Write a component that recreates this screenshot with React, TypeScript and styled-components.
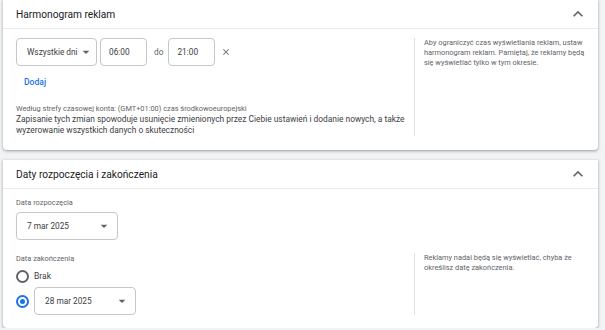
import styled, { createGlobalStyle } from 'styled-components';

const GlobalStyle = createGlobalStyle`
  html, body {
    margin: 0;
    padding: 0;
    background: #f1f3f4;
    font-family: Roboto, 'Liberation Sans', Arial, sans-serif;
    color: #3c4043;
  }
`;

const Page = styled.div`
  width: 595px;
  padding: 0 7px 0 3px;
  display: flex;
  flex-direction: column;
  gap: 10px;
`;

const Card = styled.section`
  background: #fff;
  border-radius: 0 0 4px 4px;
  box-shadow: 0 1px 2px rgba(60, 64, 67, 0.3), 0 1px 3px 1px rgba(60, 64, 67, 0.15);
`;

const CardHeader = styled.header`
  height: 28px;
  display: flex;
  align-items: center;
  justify-content: space-between;
  padding: 0 10px 0 13px;
  border-bottom: 1px solid #e8eaed;
  font-size: 10.2px;
  color: #202124;
`;

const CardBody = styled.div<{ $rowGap?: number; $padBottom?: number }>`
  display: flex;
  flex-direction: column;
  gap: ${(p) => p.$rowGap ?? 0}px;
  padding: 9px 0 ${(p) => p.$padBottom ?? 9}px 0;
`;

const Row = styled.div<{ $padBottom?: number }>`
  display: grid;
  grid-template-columns: 411px 1fr;
  padding-bottom: ${(p) => p.$padBottom ?? 0}px;
`;

const Main = styled.div`
  padding-left: 13px;
  display: flex;
  flex-direction: column;
  align-items: flex-start;
`;

const Aside = styled.aside<{ $visible?: boolean }>`
  border-left: ${(p) => (p.$visible ? '1px solid #e0e0e0' : 'none')};
  padding: 0 10px 0 9px;
  font-size: 7.4px;
  line-height: 10px;
  color: #5f6368;
`;

const Controls = styled.div`
  display: flex;
  align-items: center;
  gap: 3px;
`;

const Field = styled.div<{ $width: number; $padLeft?: number }>`
  box-sizing: border-box;
  width: ${(p) => p.$width}px;
  height: 28px;
  border: 1px solid #c4c7c5;
  border-radius: 4px;
  display: flex;
  align-items: center;
  justify-content: space-between;
  padding: 0 5px 0 ${(p) => p.$padLeft ?? 10}px;
  font-size: 8.3px;
  color: #3c4043;
  white-space: nowrap;
  svg {
    flex-shrink: 0;
  }
`;

const Word = styled.span`
  font-size: 8.3px;
  color: #5f6368;
  margin: 0 2px 0 4px;
`;

const IconButton = styled.span`
  display: inline-flex;
  color: #5f6368;
  margin-left: 3px;
`;

const TextButton = styled.button`
  border: none;
  background: none;
  font-family: inherit;
  font-size: 8.6px;
  font-weight: 500;
  color: #1a73e8;
  padding: 5px 8px;
  margin-top: 5px;
  line-height: 12px;
`;

const Note = styled.div`
  font-size: 7.4px;
  line-height: 10px;
  color: #5f6368;
  margin-top: 11px;
`;

const Paragraph = styled.p`
  margin: 0;
  font-size: 8.4px;
  line-height: 11px;
  color: #3c4043;
  width: 396px;
`;

const Label = styled.div<{ $mb?: number; $lh?: number }>`
  font-size: 7.4px;
  line-height: ${(p) => p.$lh ?? 10}px;
  color: #5f6368;
  margin-bottom: ${(p) => p.$mb ?? 0}px;
`;

const RadioRow = styled.label<{ $height: number }>`
  display: flex;
  align-items: center;
  gap: 5px;
  height: ${(p) => p.$height}px;
  font-size: 8.5px;
  color: #3c4043;
`;

const Radio = styled.span<{ $checked?: boolean }>`
  box-sizing: border-box;
  width: 13px;
  height: 13px;
  border-radius: 50%;
  border: 2px solid ${(p) => (p.$checked ? '#1a73e8' : '#5f6368')};
  display: inline-flex;
  align-items: center;
  justify-content: center;
  &::after {
    content: '';
    width: 5px;
    height: 5px;
    border-radius: 50%;
    background: ${(p) => (p.$checked ? '#1a73e8' : 'transparent')};
  }
`;

const ChevronUp = () => (
  <svg width='20' height='20' viewBox='0 0 24 24' fill='#5f6368'>
    <path d='M7.41 15.41L12 10.83l4.59 4.58L18 14l-6-6-6 6z' />
  </svg>
);

const ArrowDrop = () => (
  <svg width='16' height='16' viewBox='0 0 24 24' fill='#5f6368'>
    <path d='M7 10l5 5 5-5z' />
  </svg>
);

const Close = () => (
  <svg width='10' height='10' viewBox='0 0 24 24' fill='#5f6368'>
    <path d='M19 6.41L17.59 5 12 10.59 6.41 5 5 6.41 10.59 12 5 17.59 6.41 19 12 13.41 17.59 19 19 17.59 13.41 12z' />
  </svg>
);

export default function App() {
  return (
    <>
      <GlobalStyle />
      <Page>
        <Card>
          <CardHeader>
            Harmonogram reklam
            <ChevronUp />
          </CardHeader>
          <CardBody $padBottom={14}>
            <Row>
              <Main>
                <Controls>
                  <Field $width={81}>
                    Wszystkie dni
                    <ArrowDrop />
                  </Field>
                  <Field $width={47} $padLeft={8}>
                    06:00
                  </Field>
                  <Word>do</Word>
                  <Field $width={47} $padLeft={8}>
                    21:00
                  </Field>
                  <IconButton>
                    <Close />
                  </IconButton>
                </Controls>
                <TextButton>Dodaj</TextButton>
                <Note>Według strefy czasowej konta: (GMT+01:00) czas środkowoeuropejski</Note>
                <Paragraph>
                  Zapisanie tych zmian spowoduje usunięcie zmienionych przez Ciebie ustawień i dodanie nowych, a także
                  wyzerowanie wszystkich danych o skuteczności
                </Paragraph>
              </Main>
              <Aside $visible>
                Aby ograniczyć czas wyświetlania reklam, ustaw harmonogram reklam. Pamiętaj, że reklamy będą się
                wyświetlać tylko w tym okresie.
              </Aside>
            </Row>
          </CardBody>
        </Card>
        <Card>
          <CardHeader>
            Daty rozpoczęcia i zakończenia
            <ChevronUp />
          </CardHeader>
          <CardBody $rowGap={13}>
            <Row>
              <Main>
                <Label $mb={4}>Data rozpoczęcia</Label>
                <Field $width={102}>
                  7 mar 2025
                  <ArrowDrop />
                </Field>
              </Main>
              <Aside />
            </Row>
            <Row $padBottom={4}>
              <Main>
                <Label $lh={12}>Data zakończenia</Label>
                <RadioRow $height={22}>
                  <Radio />
                  Brak
                </RadioRow>
                <RadioRow $height={28}>
                  <Radio $checked />
                  <Field $width={102}>
                    28 mar 2025
                    <ArrowDrop />
                  </Field>
                </RadioRow>
              </Main>
              <Aside $visible>Reklamy nadal będą się wyświetlać, chyba że określisz datę zakończenia.</Aside>
            </Row>
          </CardBody>
        </Card>
      </Page>
    </>
  );
}
